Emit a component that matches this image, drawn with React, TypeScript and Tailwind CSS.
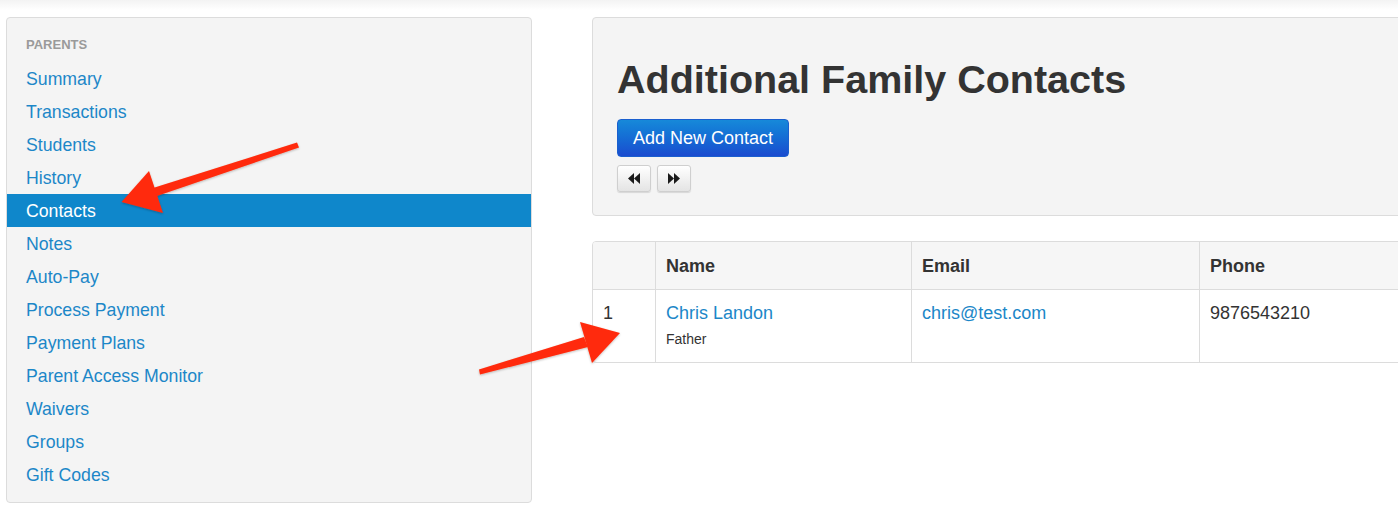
import React from 'react';

const links = [
  'Summary',
  'Transactions',
  'Students',
  'History',
  'Contacts',
  'Notes',
  'Auto-Pay',
  'Process Payment',
  'Payment Plans',
  'Parent Access Monitor',
  'Waivers',
  'Groups',
  'Gift Codes',
];

const Sidebar: React.FC<{ active: string }> = ({ active }) => (
  <aside className="w-[526px] shrink-0 self-start rounded-[4px] border border-[#dcdcdc] bg-[#f4f4f4] pb-[11px]">
    <div className="px-[19px] pt-[18px] pb-[8px] text-[13px] font-bold leading-[18px] text-[#9a9a9a]">PARENTS</div>
    <ul>
      {links.map((l) => (
        <li
          key={l}
          className={`h-[33px] px-[19px] pt-[1px] text-[17.7px] leading-[32px] ${
            l === active ? 'bg-[#0f87cb] text-white' : 'text-[#1c87c8]'
          }`}
        >
          {l}
        </li>
      ))}
    </ul>
  </aside>
);

const NavButton: React.FC<{ dir: 'back' | 'fwd' }> = ({ dir }) => (
  <button className="flex h-[27px] w-[34px] items-center justify-center rounded-[3px] border border-[#cfcfcf] bg-gradient-to-b from-white to-[#e4e4e4] shadow-[0_1px_1px_rgba(0,0,0,0.12)]">
    <svg width="12" height="11" viewBox="0 0 12 11">
      {dir === 'back' ? (
        <g fill="#1a1a1a">
          <polygon points="6,0 0,5.5 6,11" />
          <polygon points="12,0 6,5.5 12,11" />
        </g>
      ) : (
        <g fill="#1a1a1a">
          <polygon points="0,0 6,5.5 0,11" />
          <polygon points="6,0 12,5.5 6,11" />
        </g>
      )}
    </svg>
  </button>
);

const Arrows: React.FC = () => (
  <svg className="pointer-events-none absolute left-0 top-0" width="1398" height="508">
    <defs>
      <filter id="sh" x="-20%" y="-20%" width="140%" height="140%">
        <feDropShadow dx="0" dy="1" stdDeviation="1.2" floodColor="#000" floodOpacity="0.25" />
      </filter>
    </defs>
    <g fill="#ff2a0a" filter="url(#sh)">
      <polygon points="297,142.5 299,147.5 157,196 153,188" />
      <polygon points="121.5,202 149,171 163,213" />
      <polygon points="479,369.5 480,374.5 588,347 584,337" />
      <polygon points="620,333 580,322 592,363" />
    </g>
  </svg>
);

export default function App() {
  return (
    <div className="relative h-[508px] w-[1398px] overflow-hidden bg-white font-['Liberation_Sans',Arial,sans-serif]">
      <div className="h-[10px] bg-gradient-to-b from-[#f3f3f3] to-white" />
      <div className="flex gap-[60px] pl-[6px] pt-[7px]">
        <Sidebar active="Contacts" />
        <main className="w-[860px] shrink-0">
          <section className="rounded-[4px] border border-[#dcdcdc] bg-[#f4f4f4] px-[24px] pt-[40px] pb-[23px]">
            <h1 className="text-[39.5px] font-bold leading-[43px] text-[#333]">Additional Family Contacts</h1>
            <button className="mt-[18px] h-[38px] rounded-[4px] border border-[#1a5fcf] bg-gradient-to-b from-[#1789d9] to-[#1b4bcf] px-[15px] text-[18px] text-white">
              Add New Contact
            </button>
            <div className="mt-[8px] flex gap-[6px]">
              <NavButton dir="back" />
              <NavButton dir="fwd" />
            </div>
          </section>
          <table className="mt-[25px] w-full border-separate border-spacing-0 overflow-hidden rounded-[4px] border border-[#dcdcdc] text-[18px] text-[#333]">
            <thead>
              <tr className="bg-[#f6f6f6]">
                <th className="h-[48px] w-[62px] border-b border-[#dcdcdc]" />
                <th className="w-[256px] border-b border-l border-[#dcdcdc] px-[10px] pt-[1px] text-left font-bold">Name</th>
                <th className="w-[288px] border-b border-l border-[#dcdcdc] px-[10px] pt-[1px] text-left font-bold">Email</th>
                <th className="border-b border-l border-[#dcdcdc] px-[10px] pt-[1px] text-left font-bold">Phone</th>
              </tr>
            </thead>
            <tbody>
              <tr className="align-top">
                <td className="px-[10px] pt-[11px] leading-[24px]">1</td>
                <td className="border-l border-[#dcdcdc] px-[10px] pt-[11px] pb-[13px]">
                  <div className="leading-[24px] text-[#1c87c8]">Chris Landon</div>
                  <div className="mt-[4px] text-[14px] leading-[20px]">Father</div>
                </td>
                <td className="border-l border-[#dcdcdc] px-[10px] pt-[11px] leading-[24px] text-[#1c87c8]">chris@test.com</td>
                <td className="border-l border-[#dcdcdc] px-[10px] pt-[11px] leading-[24px]">9876543210</td>
              </tr>
            </tbody>
          </table>
        </main>
      </div>
      <Arrows />
    </div>
  );
}
